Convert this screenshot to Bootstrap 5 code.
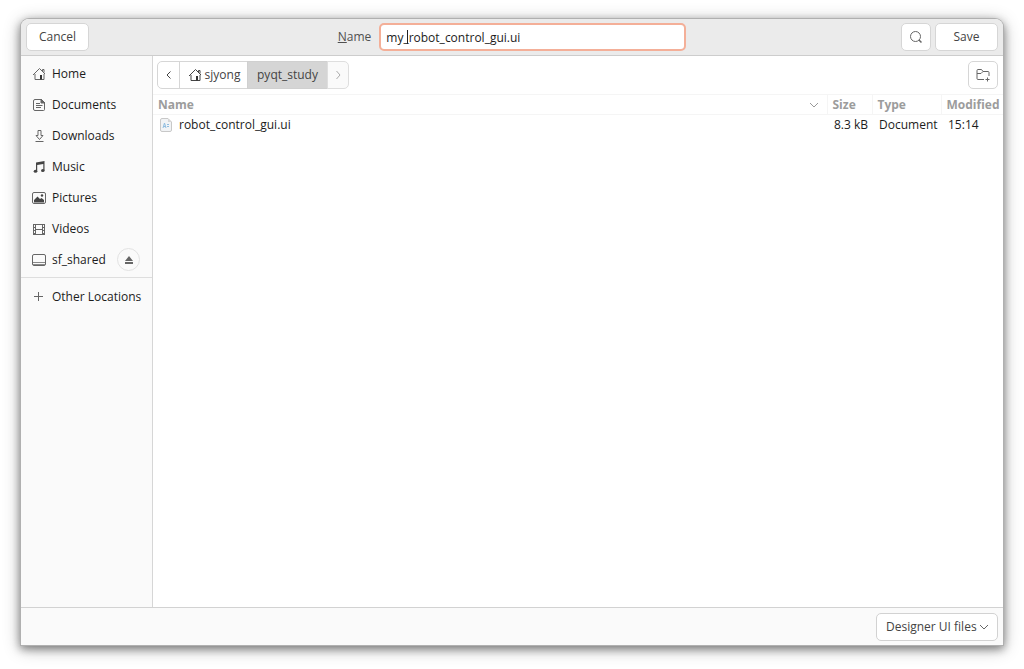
<!DOCTYPE html>
<html lang="en">
<head>
<meta charset="utf-8">
<meta name="viewport" content="width=device-width, initial-scale=1">
<title>Save file</title>
<link href="https://cdn.jsdelivr.net/npm/bootstrap@5.3.0/dist/css/bootstrap.min.css" rel="stylesheet">
<style>
  body { font-family: "Open Sans", "Noto Sans", sans-serif; font-weight: 500; font-size: 12px; line-height: 18px; color: #1c1c1c; background: #fff; padding: 19px 21px 24px; }
  .dialog { background: #fff; border-radius: 8px 8px 0 0; box-shadow: 0 0 0 1px #b0b0b0, 0 3px 8px 1px rgba(0,0,0,.4), 0 3px 18px rgba(0,0,0,.3); }
  .titlebar { display: grid; grid-template-columns: 1fr auto 1fr; background: #ebebeb; border-bottom: 1px solid #cdcdcd; border-radius: 8px 8px 0 0; padding: 4px 5px; color: #505050; }
  .btn-tool { --bs-btn-font-size: 12px; --bs-btn-font-weight: 500; --bs-btn-line-height: 18px; --bs-btn-padding-x: 0; --bs-btn-padding-y: 0; --bs-btn-border-radius: 5px; --bs-btn-color: #444; --bs-btn-bg: #fff; --bs-btn-border-color: #d6d6d6; --bs-btn-hover-bg: #f5f5f5; --bs-btn-hover-border-color: #ccc; height: 28px; }
  .btn-wide { width: 63px; }
  .btn-square { width: 30px; }
  .btn-tool svg, .places svg { display: block; }
  .btn-square svg { color: #666; }
  .name-field { width: 307px; }
  .name-field .form-control { height: 28px; padding: 0 5px; font-size: 12px; font-weight: 500; color: #1c1c1c; border: 2px solid #f4af98; border-radius: 5px; }
  .caret { position: absolute; left: 28px; top: 7px; width: 1px; height: 14px; background: #222; }
  .sidebar { width: 132px; background: #fafafa; border-right: 1px solid #d6d6d6; padding-top: 2px; }
  .places a { display: flex; align-items: center; gap: 5px; height: 31px; padding-left: 10px; color: #1c1c1c; text-decoration: none; white-space: nowrap; }
  .places svg { width: 16px; height: 16px; flex: none; color: #666; }
  .places-end { border-top: 1px solid #dedede; margin-top: 2px; padding-top: 3px; }
  .eject { width: 23px; height: 23px; right: 12px; top: 4px; border: 1px solid #e2e2e2; background: #fafafa; border-radius: 50%; padding: 0; }
  .eject svg { width: 8px; height: 8px; }
  .pathrow { padding: 5px 5px 5px 4px; }
  .pathbar .btn-tool { display: flex; align-items: center; justify-content: center; }
  .path-back { width: 23px; } .path-home { width: 69px; gap: 2px; } .path-here { width: 81px; } .path-next { width: 22px; }
  .path-here { --bs-btn-bg: #d5d5d5; --bs-btn-border-color: #d0d0d0; }
  .path-next { --bs-btn-disabled-bg: #fafafa; --bs-btn-disabled-border-color: #dedede; --bs-btn-disabled-color: #aaa; --bs-btn-disabled-opacity: 1; }
  .file-list { table-layout: fixed; width: 100%; }
  .file-list th { height: 20px; padding: 0 0 0 5px; line-height: 16px; color: #9c9c9c; border: 1px solid #f5f5f5; border-width: 1px 1px 1px 0; font-weight: 700; white-space: nowrap; }
  .file-list th:last-child { border-right: 0; }
  .file-list td { height: 20px; padding: 0 6px 0 7px; white-space: nowrap; color: #1c1c1c; }
  .file-name svg { margin-right: 7px; }
  .c-size { width: 45px; } .c-type { width: 69px; } .c-time { width: 62px; }
  .footbar { background: #fafafa; border-top: 1px solid #d2d2d2; padding: 5px 5px 4px; }
  .footbar .form-select { width: 122px; height: 28px; padding: 0 18px 0 9px; font-size: 12px; font-weight: 500; line-height: 18px; color: #444; border-color: #d2d2d2; border-radius: 5px; background-size: 10px 10px; background-position: right 8px center;
    background-image: url("data:image/svg+xml,%3csvg xmlns='http://www.w3.org/2000/svg' viewBox='0 0 10 10'%3e%3cpath d='M1 3l4 4 4-4' fill='none' stroke='%23666'/%3e%3c/svg%3e"); }
</style>
</head>
<body class="min-vh-100 d-flex flex-column">
<svg class="d-none" aria-hidden="true">
  <symbol id="home" viewBox="0 0 16 16"><path d="M2 9 8.500 2.500 14 8M11.500 5V3.500h1.500v3M4 8v5.500h9V8" fill="none" stroke="currentColor"/><path d="M9 9h2v4.500H9z" fill="#333"/></symbol>
</svg>
<main class="dialog flex-grow-1 d-flex flex-column">
  <header class="titlebar align-items-center">
    <div class="d-flex"><button type="button" class="btn btn-tool btn-wide">Cancel</button></div>
    <div class="d-flex align-items-center gap-2">
      <label for="filename"><u>N</u>ame</label>
      <div class="name-field position-relative"><input id="filename" type="text" class="form-control" value="my_robot_control_gui.ui"><span class="caret"></span></div>
    </div>
    <div class="d-flex justify-content-end gap-1">
      <button type="button" class="btn btn-tool btn-square d-flex align-items-center justify-content-center" aria-label="Search"><svg width="16" height="16" viewBox="0 0 16 16" fill="none" stroke="currentColor"><circle cx="7.500" cy="7.500" r="5"/><path d="M11 11l2.500 2.500" stroke-width="1.500"/></svg></button>
      <button type="button" class="btn btn-tool btn-wide">Save</button>
    </div>
  </header>
  <div class="d-flex flex-grow-1">
    <nav class="sidebar flex-shrink-0" aria-label="Places">
      <div class="places">
        <a href="#"><svg><use href="#home"/></svg>Home</a>
        <a href="#"><svg viewBox="0 0 16 16" fill="none" stroke="currentColor"><path d="M4 2.500h6.500L13.500 5.500V12.500q0 1-1 1H4q-1.500 0-1.500-1.500V4q0-1.500 1.500-1.500z"/><path d="M10 2v4h4z" fill="currentColor"/><path d="M5 6.500h4M5 8.500h6.500M5 10.500h5"/></svg>Documents</a>
        <a href="#"><svg viewBox="0 0 16 16" fill="none" stroke="currentColor"><path d="M7 2.500h3v5h2L8.500 11.500 5 7.500h2zM4.500 13.500h8"/></svg>Downloads</a>
        <a href="#"><svg viewBox="0 0 16 16" fill="#444"><path d="M5 3.500 13.500 2v9.500h-1.200V5L6.200 6v6.500H5z"/><ellipse cx="4.500" cy="12.300" rx="1.800" ry="1.500"/><ellipse cx="11.800" cy="11.500" rx="1.800" ry="1.500"/></svg>Music</a>
        <a href="#"><svg viewBox="0 0 16 16"><rect x="1.500" y="2.500" width="13" height="11" rx="1.500" fill="none" stroke="currentColor"/><path d="M3 10 6.500 6.500 9 9l1.500-1L13 10v2.500H3z" fill="#444"/><circle cx="11" cy="5.500" r="1.200" fill="#444"/></svg>Pictures</a>
        <a href="#"><svg viewBox="0 0 16 16" fill="none" stroke="currentColor"><path d="M2.500 3v11M13.500 3v11M4.500 3v11M11.500 3v11M2 3.500h12M4.500 8.500h7M2 13.500h12"/><path d="M3.500 3v11M12.500 3v11" stroke-dasharray="1 2"/></svg>Videos</a>
        <div class="position-relative">
          <a href="#"><svg viewBox="0 0 16 16" fill="none" stroke="currentColor"><rect x="1.500" y="2.500" width="13" height="11" rx="1.500"/><path d="M2 10.500h12M2 12.500h12" stroke="#888"/></svg>sf_shared</a>
          <button type="button" class="eject position-absolute d-flex align-items-center justify-content-center" aria-label="Eject"><svg viewBox="0 0 8 8" fill="#666"><path d="M4 0l4 5H0zM0 6h8v2H0z"/></svg></button>
        </div>
      </div>
      <div class="places places-end">
        <a href="#"><svg viewBox="0 0 16 16" stroke="currentColor"><path d="M3 7.500h9M7.500 3v9"/></svg>Other Locations</a>
      </div>
    </nav>
    <section class="flex-grow-1">
      <div class="d-flex justify-content-between pathrow">
        <div class="btn-group pathbar">
          <button type="button" class="btn btn-tool path-back" aria-label="Back"><svg width="10" height="10" viewBox="0 0 10 10" fill="none" stroke="currentColor"><path d="M6.500 1.500 3 5l3.500 3.500"/></svg></button>
          <button type="button" class="btn btn-tool path-home"><svg width="16" height="16"><use href="#home"/></svg>sjyong</button>
          <button type="button" class="btn btn-tool path-here">pyqt_study</button>
          <button type="button" class="btn btn-tool path-next" disabled aria-label="Forward"><svg width="10" height="10" viewBox="0 0 10 10" fill="none" stroke="currentColor"><path d="M3.500 1 7 5 3.500 9"/></svg></button>
        </div>
        <button type="button" class="btn btn-tool btn-square d-flex align-items-center justify-content-center" aria-label="New folder"><svg width="16" height="16" viewBox="0 0 16 16" fill="none" stroke="currentColor"><path d="M9 12.500H3q-1 0-1-1v-8q0-1 1-1h3.500L8 4.500h5q1 0 1 1V9M2 6.500h4L8 4.500M10.500 12.500h4M12.500 10.500v4"/></svg></button>
      </div>
      <table class="file-list">
        <colgroup><col><col class="c-size"><col class="c-type"><col class="c-time"></colgroup>
        <thead><tr>
          <th scope="col"><span class="d-flex align-items-center justify-content-between pe-2">Name <svg width="10" height="10" viewBox="0 0 10 10" fill="none" stroke="#999"><path d="M1 3l4 4 4-4"/></svg></span></th>
          <th scope="col">Size</th><th scope="col">Type</th><th scope="col">Modified</th>
        </tr></thead>
        <tbody><tr>
          <td><span class="file-name d-flex align-items-center"><svg width="12" height="14" viewBox="0 0 12 14"><path d="M2 .5h6L11.500 4v8q0 1.500-1.500 1.500H2Q.5 13.500.5 12V2Q.5.5 2 .5z" fill="#f1f3f5" stroke="#c8c8c8"/><path d="M8 .5V4h3.500z" fill="#d5d5d5"/><path d="M3 10l1.500-5L6 10M3.500 8.500h2M7 6.500h2M7 8.500h2" fill="none" stroke="#8fbde0"/></svg>robot_control_gui.ui</span></td>
          <td class="text-end">8.3 kB</td><td>Document</td><td>15:14</td>
        </tr></tbody>
      </table>
    </section>
  </div>
  <footer class="footbar d-flex justify-content-end">
    <select class="form-select" aria-label="File type"><option>Designer UI files</option></select>
  </footer>
</main>
<script src="https://cdn.jsdelivr.net/npm/bootstrap@5.3.0/dist/js/bootstrap.bundle.min.js"></script>
</body>
</html>
